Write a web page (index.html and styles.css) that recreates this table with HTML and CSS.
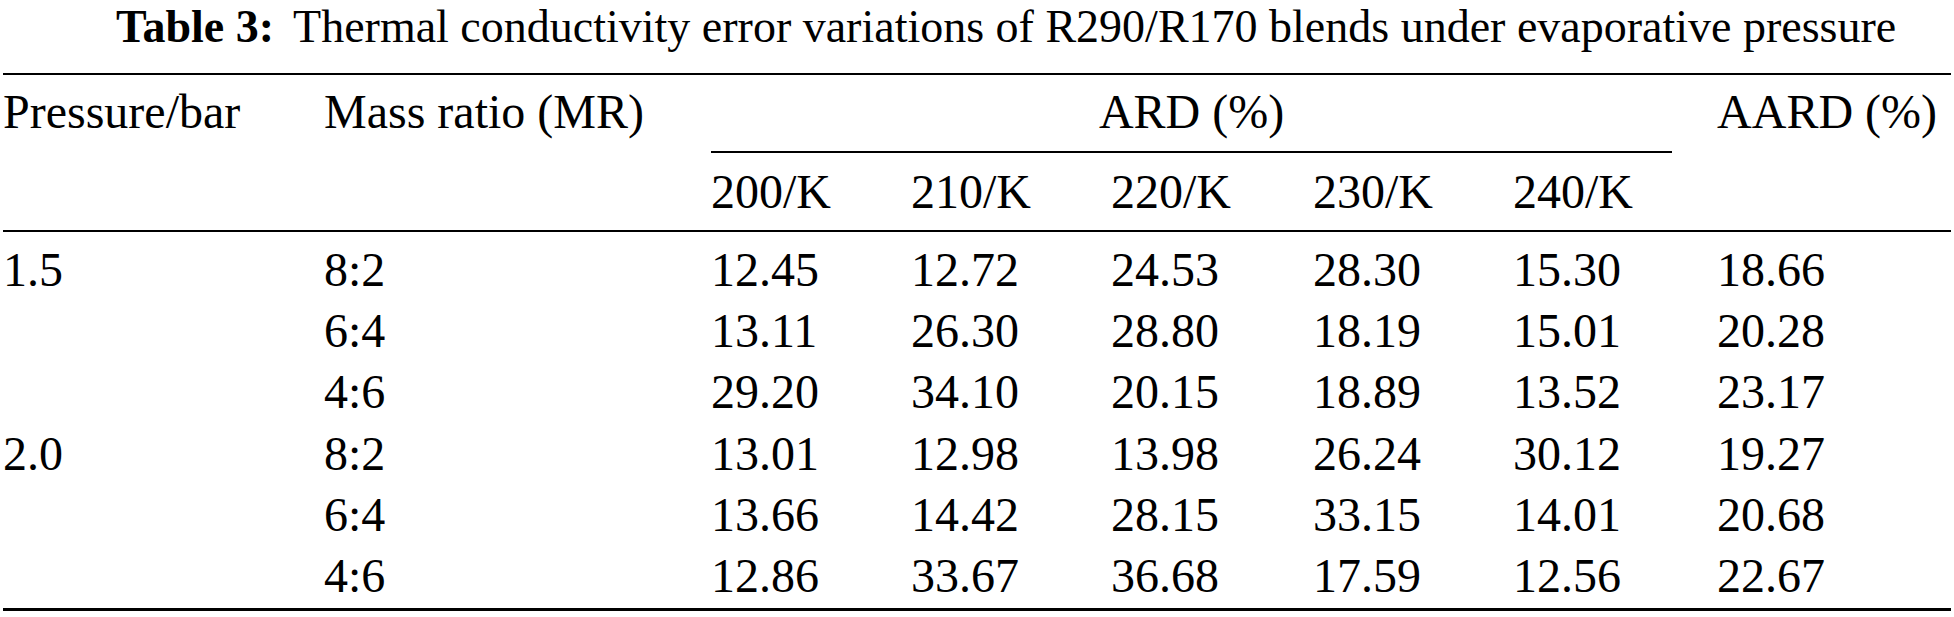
FILE: index.html
```html
<!DOCTYPE html>
<html lang="en">

<head>
    <meta charset="UTF-8">
    <meta name="viewport" content="width=device-width, initial-scale=1.0">
    <title>Table 3</title>
    <link rel="stylesheet" href="styles.css">
</head>

<body>
    <div class="page">
        <p class="caption"><b class="label">Table 3:</b>Thermal conductivity error variations of R290/R170 blends under evaporative pressure</p>
        <table class="data">
            <colgroup>
                <col class="c-press">
                <col class="c-mass">
                <col class="c-t">
                <col class="c-t">
                <col class="c-t2">
                <col class="c-t">
                <col class="c-t3">
                <col class="c-aard">
            </colgroup>
            <thead>
                <tr class="head-top">
                    <th rowspan="2" class="span-head">Pressure/bar</th>
                    <th rowspan="2" class="span-head">Mass ratio (MR)</th>
                    <th colspan="5" class="group">
                        <div class="group-label">ARD (%)</div>
                    </th>
                    <th rowspan="2" class="span-head">AARD (%)</th>
                </tr>
                <tr class="head-sub">
                    <th>200/K</th>
                    <th>210/K</th>
                    <th>220/K</th>
                    <th>230/K</th>
                    <th>240/K</th>
                </tr>
            </thead>
            <tbody>
                <tr class="first">
                    <td>1.5</td>
                    <td>8:2</td>
                    <td>12.45</td>
                    <td>12.72</td>
                    <td>24.53</td>
                    <td>28.30</td>
                    <td>15.30</td>
                    <td>18.66</td>
                </tr>
                <tr>
                    <td></td>
                    <td>6:4</td>
                    <td>13.11</td>
                    <td>26.30</td>
                    <td>28.80</td>
                    <td>18.19</td>
                    <td>15.01</td>
                    <td>20.28</td>
                </tr>
                <tr>
                    <td></td>
                    <td>4:6</td>
                    <td>29.20</td>
                    <td>34.10</td>
                    <td>20.15</td>
                    <td>18.89</td>
                    <td>13.52</td>
                    <td>23.17</td>
                </tr>
                <tr>
                    <td>2.0</td>
                    <td>8:2</td>
                    <td>13.01</td>
                    <td>12.98</td>
                    <td>13.98</td>
                    <td>26.24</td>
                    <td>30.12</td>
                    <td>19.27</td>
                </tr>
                <tr>
                    <td></td>
                    <td>6:4</td>
                    <td>13.66</td>
                    <td>14.42</td>
                    <td>28.15</td>
                    <td>33.15</td>
                    <td>14.01</td>
                    <td>20.68</td>
                </tr>
                <tr class="last">
                    <td></td>
                    <td>4:6</td>
                    <td>12.86</td>
                    <td>33.67</td>
                    <td>36.68</td>
                    <td>17.59</td>
                    <td>12.56</td>
                    <td>22.67</td>
                </tr>
            </tbody>
        </table>
    </div>
</body>

</html>
```

FILE: styles.css
```css
body,
p,
table {
    margin: 0;
    padding: 0;
}

body {
    background: #fff;
    color: #000;
    font-family: "Liberation Serif", Tinos, "Times New Roman", serif;
}

.page {
    width: 1954px;
}

.caption {
    font-size: 46px;
    line-height: 50px;
    padding: 2px 0 0 116px;
    margin-bottom: 21px;
    white-space: nowrap;
}

.caption .label {
    margin-right: 19px;
}

.data {
    margin-left: 3px;
    width: 1948px;
    table-layout: fixed;
    border-collapse: separate;
    border-spacing: 0;
    border-top: 2px solid #000;
    border-bottom: 3px solid #000;
    font-size: 48px;
}

.c-press {
    width: 321px;
}

.c-mass {
    width: 387px;
}

.c-t {
    width: 200px;
}

.c-t2 {
    width: 202px;
}

.c-t3 {
    width: 204px;
}

.c-aard {
    width: 234px;
}

.data th,
.data td {
    padding: 0;
    text-align: left;
    font-weight: normal;
    line-height: 61px;
    white-space: nowrap;
}

.span-head {
    vertical-align: top;
    padding-top: 6px !important;
    border-bottom: 2px solid #000;
}

.group {
    padding-right: 45px !important;
}

.group-label {
    text-align: center;
    padding: 6px 0 9px;
    border-bottom: 2px solid #000;
}

.head-sub th {
    padding: 8px 0 !important;
    border-bottom: 2px solid #000;
}

.data td {
    line-height: 61.2px;
}

.first td {
    padding-top: 7px;
}

.last td {
    padding-bottom: 2px;
}
```
